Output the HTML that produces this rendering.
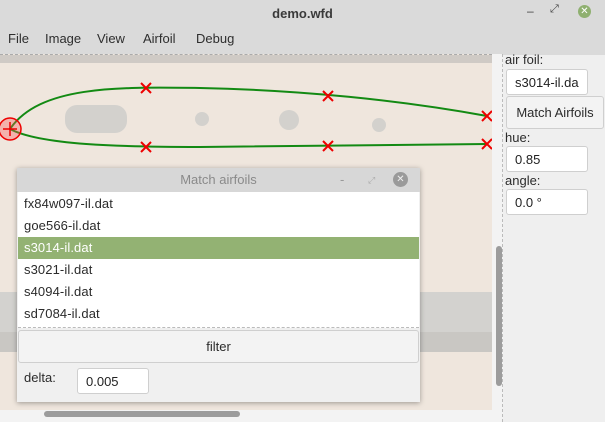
<!DOCTYPE html>
<html><head><style>
*{box-sizing:border-box;margin:0;padding:0}
body{width:605px;height:422px;overflow:hidden;background:#efefef;font-family:"Liberation Sans","DejaVu Sans",sans-serif;font-size:13px;color:#333;position:relative}
.abs{position:absolute}
.inp{position:absolute;background:#fff;border:1px solid #cfcfcf;border-radius:3px;padding-left:8px;font-size:13px;color:#222;display:flex;align-items:center}
.row{height:22px;line-height:22px;padding-left:6px;font-size:13px;color:#2b2b2b;letter-spacing:0.1px}
.m{position:absolute;top:31px;font-size:13px;color:#2e2e2e}
</style></head><body>
<div class="abs" style="left:0;top:0;width:605px;height:55px;background:#dadada"></div>
<div class="abs" style="left:0;top:6px;width:605px;text-align:center;font-weight:bold;font-size:13px;color:#3a3a3a">demo.wfd</div>
<div class="abs" style="left:527px;top:4px;font-size:12px;color:#444">–</div>
<div class="abs" style="left:550px;top:3px;font-size:11px;color:#444">⤢</div>
<div class="abs" style="left:578px;top:5px;width:13px;height:13px;border-radius:50%;background:#8fb070;color:#fff;font-size:10px;line-height:13px;text-align:center">✕</div>
<div class="m" style="left:8px">File</div><div class="m" style="left:45px">Image</div><div class="m" style="left:97px">View</div><div class="m" style="left:143px">Airfoil</div><div class="m" style="left:196px">Debug</div>
<!-- canvas -->
<div class="abs" style="left:0;top:54px;width:492px;height:356px;background:#efe6dd;border-top:1px dashed #aaa"></div>
<div class="abs" style="left:0;top:55px;width:492px;height:8px;background:#cfcac5"></div>
<div class="abs" style="left:0;top:292px;width:492px;height:40px;background:#d3d2cf"></div>
<div class="abs" style="left:0;top:332px;width:492px;height:20px;background:#c9c7c3"></div>
<svg class="abs" style="left:0;top:55px" width="492" height="356">
<rect x="65" y="50" width="62" height="28" rx="12" fill="#d3d1cd"/>
<circle cx="202" cy="64" r="7" fill="#d3d1cd"/><circle cx="289" cy="65" r="10" fill="#d3d1cd"/><circle cx="379" cy="70" r="7" fill="#d3d1cd"/>
<path d="M10 74 C 40 30, 120 32, 200 33 C 300 35, 400 45, 487 61" fill="none" stroke="#138a13" stroke-width="2"/>
<path d="M10 74 C 40 90, 120 92, 200 92 C 300 91, 400 90, 487 89" fill="none" stroke="#138a13" stroke-width="2"/>
<circle cx="10" cy="74" r="11" fill="rgba(255,80,80,0.35)" stroke="#e00" stroke-width="1.5"/>
<path d="M3 74h14M10 67v14" stroke="#e00" stroke-width="1.5"/>
<g stroke="#e00" stroke-width="2">
<path d="M141 28l10 10M151 28l-10 10"/><path d="M323 36l10 10M333 36l-10 10"/><path d="M482 56l10 10M492 56l-10 10"/>
<path d="M141 87l10 10M151 87l-10 10"/><path d="M323 86l10 10M333 86l-10 10"/><path d="M482 84l10 10M492 84l-10 10"/>
</g></svg>
<div class="abs" style="left:492px;top:54px;width:11px;height:368px;background:#f3f3f3;border-right:1px dashed #bbb"></div>
<div class="abs" style="left:496px;top:246px;width:6px;height:140px;border-radius:3px;background:#9c9c9c"></div>
<div class="abs" style="left:0;top:410px;width:492px;height:12px;background:#f3f3f3"></div>
<div class="abs" style="left:44px;top:411px;width:196px;height:6px;border-radius:3px;background:#9c9c9c"></div>
<!-- right panel -->
<div class="abs" style="left:505px;top:52px;font-size:13px;color:#2b2b2b">air foil:</div>
<div class="inp" style="left:506px;top:69px;width:82px;height:26px">s3014-il.da</div>
<div class="abs" style="left:506px;top:96px;width:98px;height:33px;background:#f3f3f3;border:1px solid #cfcfcf;border-radius:3px;font-size:13px;line-height:31px;text-align:center;color:#2b2b2b">Match Airfoils</div>
<div class="abs" style="left:505px;top:130px;font-size:13px;color:#2b2b2b">hue:</div>
<div class="inp" style="left:506px;top:146px;width:82px;height:26px">0.85</div>
<div class="abs" style="left:505px;top:173px;font-size:13px;color:#2b2b2b">angle:</div>
<div class="inp" style="left:506px;top:189px;width:82px;height:26px">0.0 °</div>
<!-- dialog -->
<div class="abs" style="left:17px;top:168px;width:403px;height:234px;background:#f0f0f0;box-shadow:0 1px 5px rgba(0,0,0,.35)">
<div style="height:24px;background:#d7d7d7;text-align:center;line-height:24px;font-size:13px;color:#8a8a8a;position:relative">Match airfoils
<span style="position:absolute;left:323px;top:0;color:#999">-</span><span style="position:absolute;left:351px;top:0;font-size:9px;color:#aaa">⤢</span>
<span style="position:absolute;left:376px;top:4px;width:15px;height:15px;border-radius:50%;background:#9a9a9a;color:#eee;font-size:10px;line-height:15px">✕</span></div>
<div style="background:#fff;margin:0 1px;height:136px;padding-top:1px;border-bottom:1px dashed #bbb">
<div class="row">fx84w097-il.dat</div><div class="row">goe566-il.dat</div>
<div class="row" style="background:#93b273;color:#fff">s3014-il.dat</div>
<div class="row">s3021-il.dat</div><div class="row">s4094-il.dat</div><div class="row">sd7084-il.dat</div></div>
<div style="margin:2px 1px 0;height:33px;border:1px solid #cfcfcf;border-radius:3px;background:#f3f3f3;text-align:center;line-height:31px;font-size:13px;color:#2b2b2b">filter</div>
<div style="position:absolute;left:7px;top:202px;font-size:13px;color:#2b2b2b">delta:</div>
<div class="inp" style="left:60px;top:200px;width:72px;height:26px">0.005</div>
</div>
</body></html>
